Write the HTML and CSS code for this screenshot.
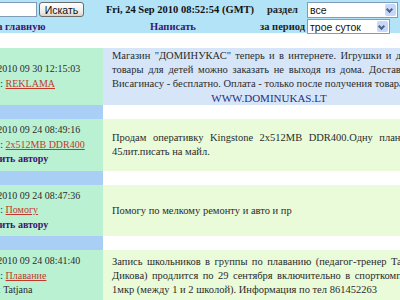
FILE: index.html
```html
<!DOCTYPE html>
<html lang="ru">
<head>
  <meta charset="UTF-8">
  <title>Объявления</title>
  <link rel="stylesheet" href="styles.css">
</head>
<body>
  <div class="page">
    <!-- шапка: поиск, время, фильтры -->
    <div class="top">
      <div class="search">
        <input class="q" type="text">
        <button class="go">Искать</button>
      </div>
      <div class="now">Fri, 24 Sep 2010 08:52:54 (GMT)</div>
      <div class="lbl">раздел</div>
      <div class="drop wide">
        <select><option>все</option></select>
      </div>

      <a class="nav home" href="#">На главную</a>
      <a class="nav write" href="#">Написать</a>
      <div class="lbl">за период</div>
      <div class="drop">
        <select><option>трое суток</option></select>
      </div>
    </div>

    <div class="spacer"></div>

    <!-- объявления -->
    <div class="post ad">
      <div class="meta">
        <div>Дата: 2010 09 30 12:15:03</div>
        <div>Раздел: <a class="subj" href="#">REKLAMA</a></div>
      </div>
      <div class="text">
        <p>Магазин "ДОМИНУКАС" теперь и в интернете. Игрушки и другие товары для детей можно заказать не выходя из дома. Доставка по Висагинасу - бесплатно. Оплата - только после получения товара.</p>
        <p class="site">WWW.DOMINUKAS.LT</p>
      </div>
    </div>
    <div class="gap"><div></div><div></div></div>

    <div class="post">
      <div class="meta">
        <div>Дата: 2010 09 24 08:49:16</div>
        <div>Раздел: <a class="subj" href="#">2x512MB DDR400</a></div>
        <div><a class="reply" href="#">Ответить автору</a></div>
      </div>
      <div class="text">
        <p>Продам оперативку Kingstone 2x512MB DDR400.Одну планку за 45лит.писать на майл.</p>
      </div>
    </div>
    <div class="gap"><div></div><div></div></div>

    <div class="post">
      <div class="meta">
        <div>Дата: 2010 09 24 08:47:36</div>
        <div>Раздел: <a class="subj" href="#">Помогу</a></div>
        <div><a class="reply" href="#">Ответить автору</a></div>
      </div>
      <div class="text">
        <p>Помогу по мелкому ремонту и авто и пр</p>
      </div>
    </div>
    <div class="gap"><div></div><div></div></div>

    <div class="post">
      <div class="meta">
        <div>Дата: 2010 09 24 08:41:40</div>
        <div>Раздел: <a class="subj" href="#">Плавание</a></div>
        <div>Автор: Tatjana</div>
      </div>
      <div class="text">
        <p>Запись школьников в группы по плаванию (педагог-тренер Татьяна Дикова) продлится по 29 сентября включительно в спорткомплексе 1мкр (между 1 и 2 школой). Информация по тел 861452263</p>
      </div>
    </div>
    <div class="gap"><div></div><div></div></div>
  </div>
</body>
</html>
```

FILE: styles.css
```css
/* цвета старой доски объявлений */
:root {
  --top-bg: #b3e3f7;
  --meta-bg: #bbf1d3;
  --gap-bg: #a9cff7;
  --ad-bg: #d6e6f8;
  --text-bg: #e9fbd9;
  --link: #3a1670;
  --subj: #c0392b;
  --ink: #2b2b2b;
}

html, body {
  overflow: hidden;
}

body {
  margin: 0;
  background: #fff;
  color: var(--ink);
  font-family: "Liberation Serif", "Times New Roman", serif;
  font-size: 10.5px;
}

.page {
  width: 475px;
  margin-left: -40px;
}

/* Шапка */
.top {
  display: grid;
  grid-template-columns: 140px 160px 45px 95px;
  grid-template-rows: 17px 15px;
  row-gap: 1px;
  align-items: center;
  height: 33px;
  padding-top: 1px;
  box-sizing: border-box;
  background: var(--top-bg);
}

.search {
  display: flex;
  align-items: center;
  gap: 2px;
  padding-left: 5px;
}

.q {
  width: 70px;
  height: 13px;
  margin: 0;
  padding: 0;
  border: 1px solid #7f9db9;
  background: #fff;
}

.go {
  width: 45px;
  height: 15px;
  margin: 0;
  padding: 0;
  border: 1px solid #6b6b6b;
  border-radius: 3px;
  background: linear-gradient(#ffffff, #ecebe6 70%, #d6d3ca);
  font-family: "Liberation Sans", Arial, sans-serif;
  font-size: 10.5px;
  color: #111;
}

.now {
  text-align: center;
  font-weight: bold;
  color: #111;
}

.lbl {
  text-align: center;
  font-weight: bold;
  color: #222;
}

.nav {
  font-weight: bold;
  color: var(--link);
  text-decoration: none;
}

.home {
  padding-left: 29px;
}

.write {
  justify-self: center;
  margin-right: 14px;
}

.drop {
  position: relative;
  width: 83px;
  height: 15px;
  margin-left: 2px;
}

.drop.wide {
  width: 91px;
  height: 16px;
}

.drop select {
  appearance: none;
  width: 100%;
  height: 100%;
  margin: 0;
  padding: 0 0 0 2px;
  border: 1px solid #7f9db9;
  border-radius: 0;
  background: #fff;
  font-family: "Liberation Sans", Arial, sans-serif;
  font-size: 10.5px;
  color: #111;
}

/* кнопка со стрелкой у выпадающего списка */
.drop::after {
  content: "";
  position: absolute;
  top: 2px;
  right: 2px;
  bottom: 2px;
  width: 11px;
  border-radius: 2px;
  background: #c5d8fa;
}

.drop::before {
  content: "";
  position: absolute;
  z-index: 1;
  top: 50%;
  right: 6px;
  width: 3px;
  height: 3px;
  margin-top: -3px;
  border-right: 2px solid #4d6185;
  border-bottom: 2px solid #4d6185;
  transform: rotate(45deg);
}

.spacer {
  height: 15px;
}

/* Объявления */
.post {
  display: grid;
  grid-template-columns: 143px 1fr;
}

.meta {
  display: flex;
  flex-direction: column;
  justify-content: center;
  padding: 4px 0 4px 12px;
  background: var(--meta-bg);
  font-size: 10px;
  line-height: 14.5px;
}

.subj {
  color: var(--subj);
}

.reply {
  font-weight: bold;
  color: var(--link);
  text-decoration: none;
}

.text {
  display: flex;
  flex-direction: column;
  justify-content: center;
  padding: 1px 9px 0;
  background: var(--text-bg);
  line-height: 14px;
  text-align: justify;
}

.ad .text {
  background: var(--ad-bg);
}

.text p {
  margin: 0;
}

.site {
  text-align: center;
  color: #1f2f80;
  font-size: 11px;
}

.gap {
  display: grid;
  grid-template-columns: 143px 1fr;
  height: 14px;
}

.gap div:first-child {
  background: var(--gap-bg);
}
```
